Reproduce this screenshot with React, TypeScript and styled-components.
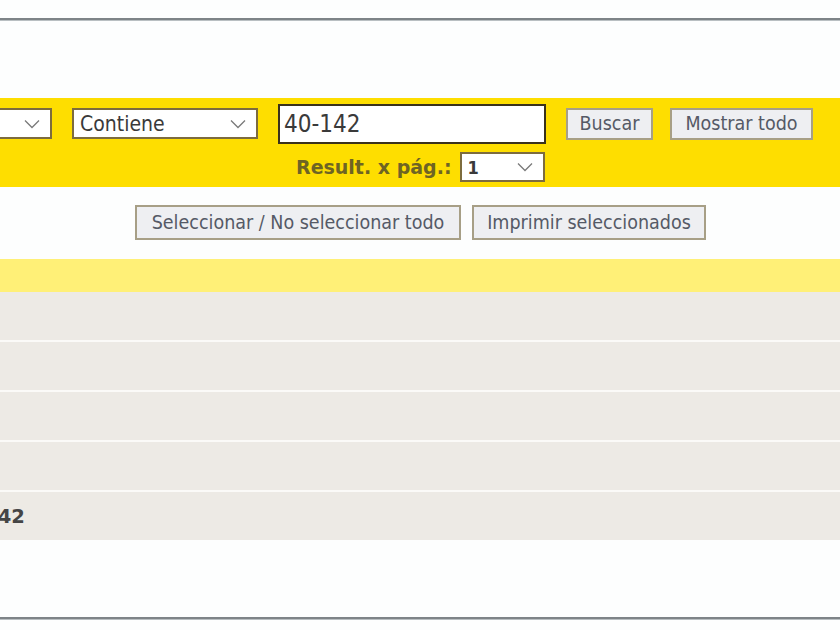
import React from "react";
import styled, { createGlobalStyle } from "styled-components";

const Global = createGlobalStyle`
  html, body { margin: 0; padding: 0; background: #fff; overflow: hidden; }
  body { width: 840px; height: 630px; font-family: "DejaVu Sans", Tahoma, sans-serif; }
`;

const Page = styled.div`
  width: 840px;
  height: 630px;
  display: flex;
  flex-direction: column;
  overflow: hidden;
  background: #fdfefe;
`;

const Rule = styled.div<{ $top: number }>`
  height: 2px;
  background: #7e8488;
  margin-top: ${(p) => p.$top}px;
  border-bottom: 1px solid #b9bfc2;
  flex-shrink: 0;
`;

const SearchBand = styled.div`
  margin-top: 77px;
  height: 89px;
  background: #fede00;
  display: flex;
  flex-direction: column;
  flex-shrink: 0;
`;

const SearchRow = styled.div`
  display: flex;
  align-items: center;
  height: 49px;
  padding-top: 1px;
`;

const FakeSelect = styled.div<{ $w: number; $h: number; $ml?: number }>`
  box-sizing: border-box;
  width: ${(p) => p.$w}px;
  height: ${(p) => p.$h}px;
  margin-left: ${(p) => p.$ml ?? 0}px;
  background: #fff;
  border: 2px solid #7d6c3e;
  display: flex;
  align-items: center;
  justify-content: space-between;
  padding: 0 10px 0 6px;
  font-family: "DejaVu Sans", Tahoma, sans-serif;
  color: #333;
  flex-shrink: 0;
`;

const SelectText = styled.span<{ $size: number; $bold?: boolean }>`
  font-size: ${(p) => p.$size}px;
  font-weight: ${(p) => (p.$bold ? 700 : 400)};
  font-family: "DejaVu Sans Condensed", "DejaVu Sans", sans-serif;
  color: #3a3a3a;
`;

const Chevron = () => (
  <svg width="16" height="10" viewBox="0 0 16 10">
    <path d="M1 1.5 L8 8.5 L15 1.5" fill="none" stroke="#7a7a7a" strokeWidth="1.3" />
  </svg>
);

const TextBox = styled.div`
  box-sizing: border-box;
  width: 268px;
  height: 40px;
  margin-left: 20px;
  background: #fff;
  border: 2px solid #3a321c;
  display: flex;
  align-items: center;
  padding-left: 4px;
  font-family: "DejaVu Sans Condensed", "DejaVu Sans", sans-serif;
  font-size: 24px;
  color: #3a3a3a;
  flex-shrink: 0;
`;

const Btn = styled.button<{ $w: number; $h: number; $ml: number }>`
  box-sizing: border-box;
  width: ${(p) => p.$w}px;
  height: ${(p) => p.$h}px;
  margin-left: ${(p) => p.$ml}px;
  background: #eeeff2;
  border: 2px solid #a79f86;
  font-family: "DejaVu Sans Condensed", "DejaVu Sans", sans-serif;
  font-size: 19.5px;
  color: #555a66;
  padding: 0;
  flex-shrink: 0;
  white-space: nowrap;
`;

const PerPageRow = styled.div`
  display: flex;
  align-items: center;
  padding-left: 296px;
  padding-top: 3px;
  height: 32px;
`;

const PerPageLabel = styled.span`
  font-family: "DejaVu Sans", Verdana, sans-serif;
  font-weight: 700;
  font-size: 19px;
  color: #6e6424;
  margin-right: 8px;
`;

const ActionRow = styled.div`
  display: flex;
  padding-left: 135px;
  margin-top: 18px;
  height: 35px;
  flex-shrink: 0;
`;

const HeaderBand = styled.div`
  margin-top: 19px;
  height: 33px;
  background: #fff077;
  flex-shrink: 0;
`;

const DataRow = styled.div`
  height: 48px;
  background: #edeae5;
  border-bottom: 2px solid #fbfaf8;
  display: flex;
  align-items: center;
  flex-shrink: 0;
  overflow: hidden;
  &:last-of-type { border-bottom: none; }
`;

const CodeCell = styled.span`
  font-family: "DejaVu Sans", Verdana, sans-serif;
  font-weight: 700;
  font-size: 19.5px;
  color: #454545;
  margin-left: -51px;
  white-space: nowrap;
`;

const Rows = styled.div`
  display: flex;
  flex-direction: column;
  flex-shrink: 0;
`;

export default function App() {
  const rows = ["", "", "", "", "40-142"];
  return (
    <>
      <Global />
      <Page>
        <Rule $top={18} />
        <SearchBand>
          <SearchRow>
            <FakeSelect $w={152} $h={31} $ml={-100}>
              <span />
              <Chevron />
            </FakeSelect>
            <FakeSelect $w={186} $h={31} $ml={20}>
              <SelectText $size={21}>Contiene</SelectText>
              <Chevron />
            </FakeSelect>
            <TextBox>40-142</TextBox>
            <Btn $w={87} $h={32} $ml={20}>Buscar</Btn>
            <Btn $w={143} $h={32} $ml={17}>Mostrar todo</Btn>
          </SearchRow>
          <PerPageRow>
            <PerPageLabel>Result. x pág.:</PerPageLabel>
            <FakeSelect $w={85} $h={30}>
              <SelectText $size={18} $bold>1</SelectText>
              <Chevron />
            </FakeSelect>
          </PerPageRow>
        </SearchBand>
        <ActionRow>
          <Btn $w={326} $h={35} $ml={0}>Seleccionar / No seleccionar todo</Btn>
          <Btn $w={234} $h={35} $ml={11}>Imprimir seleccionados</Btn>
        </ActionRow>
        <HeaderBand />
        <Rows>
          {rows.map((r, i) => (
            <DataRow key={i}>{r && <CodeCell>{r}</CodeCell>}</DataRow>
          ))}
        </Rows>
        <Rule $top={77} />
      </Page>
    </>
  );
}
